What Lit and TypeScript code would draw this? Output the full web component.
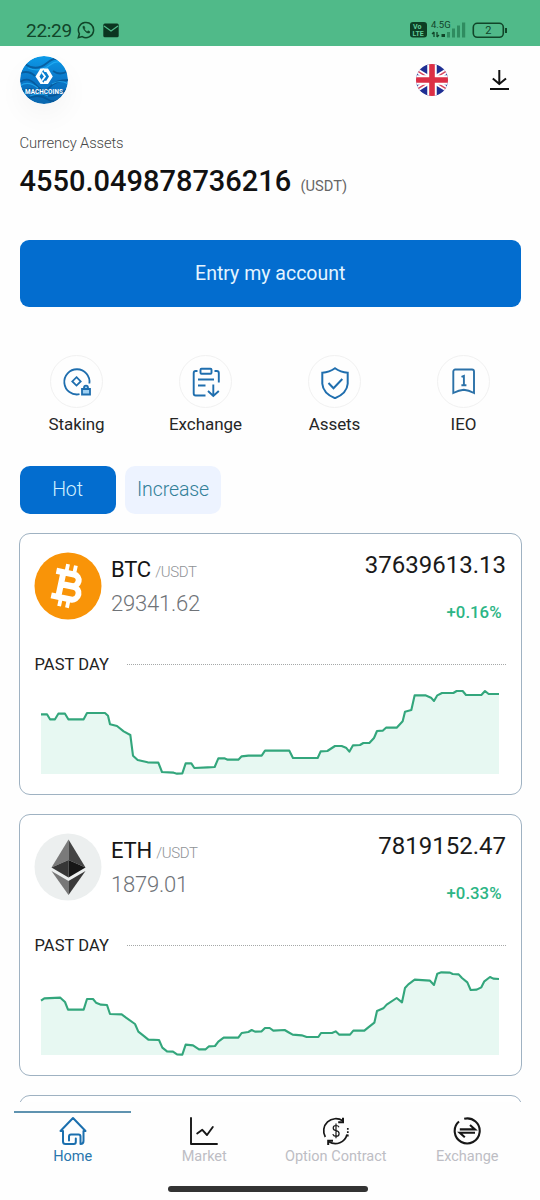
import { LitElement, html, css, svg } from "lit";
import { customElement, property } from "lit/decorators.js";

type Point = [number, number];

const BTC_DAY: Point[] = [
  [0, 121], [18, 121], [27, 136], [42, 136], [52, 119], [72, 119], [82, 136], [128, 136], [138, 117], [192, 117],
  [201, 125], [207, 151], [228, 156], [248, 172], [268, 183], [276, 245], [290, 258], [320, 265], [352, 266],
  [363, 294], [398, 296], [408, 299], [424, 298], [434, 268], [451, 268], [460, 282], [500, 280], [521, 279],
  [532, 253], [550, 253], [560, 257], [592, 257], [602, 247], [622, 245], [662, 245], [672, 230], [745, 230],
  [756, 252], [830, 252], [839, 232], [859, 231], [882, 216], [902, 216], [915, 221], [925, 233], [936, 214],
  [957, 213], [967, 207], [985, 207], [999, 192], [1008, 171], [1025, 170], [1035, 161], [1067, 161], [1085, 142],
  [1092, 113], [1111, 108], [1121, 64], [1153, 64], [1170, 71], [1179, 81], [1189, 64], [1203, 57], [1237, 57],
  [1247, 51], [1265, 51], [1275, 63], [1321, 63], [1332, 51], [1343, 60], [1374, 60],
];

const ETH_DAY: Point[] = [
  [0, 137], [10, 130], [58, 128], [72, 141], [81, 164], [128, 164], [138, 132], [156, 132], [165, 143], [180, 149],
  [198, 150], [207, 177], [242, 178], [255, 188], [282, 207], [292, 230], [310, 244], [322, 254], [354, 255],
  [364, 278], [378, 289], [396, 290], [408, 298], [424, 299], [434, 269], [456, 271], [474, 283], [494, 283],
  [504, 274], [522, 273], [532, 260], [548, 248], [592, 248], [602, 234], [622, 231], [632, 225], [642, 230],
  [662, 229], [672, 219], [686, 219], [697, 227], [731, 225], [741, 231], [755, 239], [782, 241], [797, 246],
  [832, 246], [840, 234], [873, 234], [884, 229], [895, 239], [927, 239], [937, 227], [970, 227], [982, 217],
  [1000, 203], [1008, 168], [1027, 160], [1037, 149], [1067, 129], [1083, 142], [1092, 99], [1102, 88], [1121, 74],
  [1167, 77], [1179, 90], [1189, 56], [1201, 52], [1227, 53], [1235, 57], [1253, 58], [1263, 69], [1279, 82],
  [1289, 105], [1307, 104], [1321, 97], [1330, 79], [1347, 66], [1357, 71], [1374, 72],
];

const btcIcon = html`<svg width="68" height="68" viewBox="0 0 68 68">
  <circle cx="34" cy="34" r="33.5" fill="#f99408" />
  <g transform="rotate(12 34 34)" fill="none" stroke="#fff" stroke-width="6">
    <path d="M19.500 21.500H37.500a5.800 5.800 0 0 1 0 11.800H27M27 33.700H39.500a6.400 6.400 0 0 1 0 12.900H19.500M26.700 21V47" />
    <path d="M29.500 12.500V22M37.500 12.500V22M29.500 46V55.500M37.500 46V55.500" stroke-width="3.800" />
  </g>
</svg>`;

const ethIcon = html`<svg width="68" height="68" viewBox="0 0 68 68">
  <circle cx="34" cy="34" r="33.5" fill="#ecefef" />
  <path d="M34.500 6.500L17.500 34.500L34.500 27Z" fill="#7a7a7a" />
  <path d="M34.500 6.500L51.500 34.500L34.500 27Z" fill="#444" />
  <path d="M34.500 27L17.500 34.500L34.500 44.500Z" fill="#373737" />
  <path d="M34.500 27L51.500 34.500L34.500 44.500Z" fill="#161616" />
  <path d="M17.500 38L34.500 48V62Z" fill="#777" />
  <path d="M51.500 38L34.500 48V62Z" fill="#3a3a3a" />
</svg>`;

@customElement("area-chart")
class AreaChart extends LitElement {
  @property({ attribute: false }) points: Point[] = [];

  static styles = css`
    :host { display: block; height: 100px; }
    .plot { display: block; width: 458px; height: 100px; overflow: visible; }
    .area { fill: #e7f8f2; }
    .line { fill: none; stroke: #33a67c; stroke-width: 6.3; stroke-linejoin: round; }
  `;

  render() {
    const line = this.points.map((p) => p.join(",")).join(" ");
    return html`<svg class="plot" viewBox="0 0 1374 300">
      ${svg`<polygon class="area" points="0,300 ${line} 1374,300" />
      <polyline class="line" points=${line} />`}
    </svg>`;
  }
}

@customElement("coin-card")
class CoinCard extends LitElement {
  @property() symbol = "";
  @property() price = "";
  @property() volume = "";
  @property() change = "";
  @property({ attribute: false }) icon: unknown = null;
  @property({ attribute: false }) points: Point[] = [];

  static styles = css`
    :host {
      display: block; box-sizing: border-box; height: 262.500px; flex: none;
      border: 1px solid #9fb2c2; border-radius: 11px; background: #fff;
      padding: 18px 14.500px 0 14px;
    }
    .top { display: flex; height: 68px; }
    .icon { width: 68px; height: 68px; }
    .icon svg { display: block; }
    .name { margin-left: 9px; padding-top: 1px; flex: 1; }
    .pair { height: 34px; line-height: 34px; font-size: 22px; letter-spacing: -0.200px; color: #151515; white-space: nowrap; }
    .quote { font-size: 15px; font-weight: 300; color: #8f9296; letter-spacing: -0.400px; margin-left: -1px; }
    .price { height: 34px; line-height: 34px; font-size: 22px; letter-spacing: -0.200px; font-weight: 300; color: #6f7378; }
    .stats { text-align: right; }
    .volume { height: 26px; line-height: 26px; font-size: 24px; color: #1a1a1a; }
    .change { margin-top: 21px; padding-right: 4.500px; line-height: 26px; font-size: 16.800px; font-weight: 500; color: #2cb585; }
    .period { display: flex; align-items: center; gap: 18.500px; height: 20px; margin-top: 35px; font-size: 16.500px; letter-spacing: 0.050px; color: #222; padding-left: 0.500px; }
    .rule { flex: 1; border-top: 1px dotted #a5a8a8; }
    .chart { margin: -1px 0 0 7px; }
  `;

  render() {
    return html`
      <div class="top">
        <div class="icon">${this.icon}</div>
        <div class="name">
          <div class="pair">${this.symbol} <span class="quote">/USDT</span></div>
          <div class="price">${this.price}</div>
        </div>
        <div class="stats">
          <div class="volume">${this.volume}</div>
          <div class="change">${this.change}</div>
        </div>
      </div>
      <div class="period"><span>PAST DAY</span><span class="rule"></span></div>
      <area-chart class="chart" .points=${this.points}></area-chart>
    `;
  }
}

const stakingIcon = html`<svg width="30" height="30" viewBox="0 0 30 30" fill="none" stroke="#1f6eae" stroke-width="1.800">
  <path d="M17.500 27.200A12.600 12.600 0 1 1 27.400 16.500" /><path d="M14.500 10.200L18.700 14.400L14.500 18.600L10.300 14.400Z" />
  <path d="M20 22H28V27.500H20ZM22 22V20.700a2 2 0 0 1 4 0V22" fill="#9fd0f2" />
</svg>`;
const clipboardIcon = html`<svg width="30" height="32" viewBox="0 0 30 32" fill="none" stroke="#1f6eae" stroke-width="1.900">
  <rect x="9.500" y="2.800" width="11" height="5" rx="1" />
  <path d="M6.500 5H4.700a2 2 0 0 0-2 2V27.500a2 2 0 0 0 2 2H14.500M23.500 5h2.300a2 2 0 0 1 2 2V16.500M7 13.500H23M7 19.500H14.500M22.300 18.500V29.500M17 25L22.300 30L27.800 25" />
</svg>`;
const shieldIcon = html`<svg width="30" height="34" viewBox="0 0 30 34" fill="none" stroke="#1f6eae" stroke-width="2">
  <path d="M15 4Q20.500 8 27.700 8.500V19.500Q27 29 15 34Q3 29 2.300 19.500V8.500Q9.500 8 15 4Z" transform="translate(0 -0.800)" /><path d="M8.500 18L13.500 23.300L22.300 14" />
</svg>`;
const ticketIcon = html`<svg width="26" height="28" viewBox="0 0 26 28" fill="none" stroke="#2b71a8" stroke-width="1.900">
  <path d="M4.300 1.500H21a2 2 0 0 1 2 2V25Q17.500 22.300 12.800 21.800Q8 22.300 2.300 25V3.500A2 2 0 0 1 4.300 1.500Z" />
  <path d="M10.500 8.800L12.900 7.800V16.800M10.400 17.200H15.400" />
</svg>`;

const homeIcon = html`<svg width="30" height="30" viewBox="0 0 30 30" fill="none" stroke="#1b6fae" stroke-width="2" stroke-linecap="round" stroke-linejoin="round">
  <path d="M5 15H2.500L15 2L27.500 15H25.500V25Q25.500 28 22.500 28V20.500a2 2 0 0 0-2-2H13a2 2 0 0 0-2 2V24.500M5 15V25.500a2.500 2.500 0 0 0 2.500 2.500H15.800a2 2 0 0 0 2-2V22.500" />
</svg>`;
const marketIcon = html`<svg width="30" height="30" viewBox="0 0 30 30" fill="none" stroke="#171717" stroke-width="1.900" stroke-linecap="round" stroke-linejoin="round">
  <path d="M2 2V28H28M8.200 17.500L13.300 13.800L18 19L23.800 11" />
</svg>`;
const optionIcon = html`<svg width="30" height="30" viewBox="0 0 30 30" fill="none" stroke="#171717" stroke-width="1.700">
  <path d="M4.300 21A12.200 12.200 0 0 1 21.700 4.800M26 18.500A12 12 0 0 1 8 25.800" />
  <path d="M22 1.800V6.200H17.200M12 24.800H7.200V29" stroke-width="2" />
  <path d="M26.800 12V20.500" stroke-dasharray="1.800 1.500" />
  <path d="M18 11.200Q17.300 9.500 15 9.500Q12.200 9.500 12.200 12Q12.200 14.200 15 14.700Q18.100 15.200 18.100 17.700Q18.100 20.300 15 20.300Q12.400 20.300 11.800 18.200M15 7.500V22.300" stroke-width="1.200" />
</svg>`;
const exchangeIcon = html`<svg width="30" height="30" viewBox="0 0 30 30" fill="none" stroke="#171717" stroke-width="2.100">
  <path d="M12.200 2.800A12.500 12.500 0 1 1 7 5.500" />
  <path d="M7.800 13.400H23L18 9M23 16.800H7.800L12.800 21.200" />
</svg>`;

@customElement("app-root")
class AppRoot extends LitElement {
  static styles = css`
    :host { display: block; font-family: Roboto, "Noto Sans", sans-serif; color: #1c1c1c; }
    .screen { display: flex; flex-direction: column; width: 540px; height: 1200px; overflow: hidden; background: #fefefe; }
    svg { display: block; }
    .status { flex: none; display: flex; align-items: center; height: 32px; padding: 14px 32px 0 26px; background: #50ba89; color: #114529; }
    .clock { font-size: 19px; letter-spacing: -0.300px; line-height: 32px; width: 51px; padding-top: 1px; }
    .status-mail { margin-left: 8px; }
    .status-right { margin-left: auto; display: flex; align-items: center; }
    .network { display: flex; flex-direction: column; width: 36px; margin-left: 4px; }
    .gen { font-size: 9.500px; line-height: 9px; height: 9px; margin-top: -2px; }
    .bars { margin-top: -7px; }
    .battery { margin-left: 5px; }
    .header { flex: none; display: flex; align-items: center; height: 68px; padding: 0 30px 0 19.500px; }
    .logo { border-radius: 50%; box-shadow: 0 12px 28px rgba(0, 0, 0, 0.040); width: 48px; height: 48px; }
    .flag { margin-left: auto; margin-right: 41px; }
    .assets { flex: none; box-sizing: border-box; height: 86px; padding: 18px 19.500px 0; }
    .caption { font-size: 14.800px; line-height: 22px; color: #484848; font-weight: 300; letter-spacing: -0.120px; }
    .balance { margin-top: 8.500px; line-height: 36px; font-size: 29px; font-weight: 500; color: #111; }
    .unit { font-size: 14.700px; font-weight: 400; color: #666; margin-left: 2px; }
    .entry { flex: none; margin: 39.500px 19px 0 19.500px; height: 67.500px; line-height: 67px; border: 0; padding: 0; border-radius: 9px; background: #036dcf; color: #e4f4ff; font: inherit; font-size: 19.500px; }
    .shortcuts { flex: none; display: grid; grid-template-columns: repeat(4, 129px); margin: 48px 0 0 12px; height: 110.500px; }
    .shortcut { display: flex; flex-direction: column; align-items: center; }
    .disc { box-sizing: border-box; width: 53px; height: 53px; border: 1.500px solid #f1f1f1; border-radius: 50%; display: grid; place-items: center; }
    .shortcut-label { margin-top: 4px; line-height: 24px; font-size: 17px; letter-spacing: -0.050px; color: #262626; }
    .tabs { flex: none; display: flex; gap: 9.500px; padding-left: 19.500px; height: 48px; }
    .tab { width: 96px; height: 48px; line-height: 48px; border-radius: 10px; text-align: center; font-size: 19.500px; font-weight: 300; background: #edf3ff; color: #327f98; letter-spacing: -0.100px; }
    .tab.active { background: #036dcf; color: #d3f1ff; }
    .list { flex: 1; min-height: 0; overflow: hidden; display: flex; flex-direction: column; gap: 18.500px; padding: 19px 18.500px 0 19px; }
    .next-card { flex: none; box-sizing: border-box; height: 263px; border: 1px solid #9fb2c2; border-radius: 11px; background: #fff; }
    .nav { flex: none; height: 98px; background: #fefefe; display: flex; flex-direction: column; align-items: center; }
    .nav-items { display: grid; grid-template-columns: repeat(4, 131.500px); height: 84px; }
    .nav-item { display: flex; flex-direction: column; align-items: center; color: #bdbdc4; }
    .marker { height: 2px; width: 117px; margin-top: 8.500px; }
    .active .marker { background: #5f93b0; }
    .nav-item svg { margin-top: 3px; }
    .nav-label { margin-top: 1.500px; font-size: 14.500px; line-height: 20px; white-space: nowrap; }
    .nav-item.active { color: #2976ad; }
    .handle { width: 200px; height: 5.500px; border-radius: 3px; background: #333; margin-right: 4px; }
  `;

  private shortcut(icon: unknown, label: string) {
    return html`<div class="shortcut"><div class="disc">${icon}</div><div class="shortcut-label">${label}</div></div>`;
  }

  private navItem(icon: unknown, label: string, active = false) {
    return html`<div class="nav-item ${active ? "active" : ""}">
      <div class="marker"></div>${icon}<div class="nav-label">${label}</div>
    </div>`;
  }

  render() {
    return html`<div class="screen">
      <div class="status">
        <span class="clock">22:29</span>
        <svg width="18" height="18" viewBox="0 0 18 18" fill="none" stroke="#114529" stroke-width="1.500">
          <path d="M1.300 16.700L2.400 12.800A7.600 7.600 0 1 1 5.200 15.600Z" />
          <path d="M6 5.200C5.200 7.500 9.500 13 12.500 12L13 10.800L11 9.700L10 10.700C8.800 10.200 7.900 9.100 7.400 8L8 7.200L7.300 5.200Z" fill="#114529" stroke-width="0.500" />
        </svg>
        <svg class="status-mail" width="16" height="15" viewBox="0 0 16 15">
          <rect x="0.300" y="0.500" width="15.400" height="13.800" rx="1.500" fill="#0b3520" /><path d="M1 3L8 8L15 3" fill="none" stroke="#50ba89" stroke-width="1.300" />
        </svg>
        <div class="status-right">
          <svg width="17" height="16" viewBox="0 0 17 16">
            <rect width="17" height="15.500" rx="3" fill="#0d3e24" />
            <text x="3" y="7" font-size="7" font-weight="700" fill="#62cc9b">Vo</text><text x="2.500" y="13.800" font-size="7" font-weight="700" fill="#62cc9b">LTE</text>
          </svg>
          <div class="network">
            <span class="gen">4.5G</span>
            <svg class="bars" width="36" height="16" viewBox="0 0 36 16">
              <path d="M3 10V15M1 12L3 10M6 10V15M8 13L6 15" stroke="#114529" stroke-width="1.300" />
              <rect x="10.500" y="12" width="3.500" height="3" fill="#114529" />
              <g fill="#2f8c60"><rect x="16" y="10" width="3" height="5.500" /><rect x="21" y="6.500" width="3" height="9" /><rect x="26" y="3.500" width="3" height="12" /><rect x="31" y="0.500" width="3.200" height="15" /></g>
            </svg>
          </div>
          <svg class="battery" width="36" height="17" viewBox="0 0 36 17">
            <rect x="1.300" y="1.300" width="30" height="14" rx="4" fill="none" stroke="#114529" stroke-width="1.600" />
            <path d="M34 6V11" stroke="#114529" stroke-width="2" /><text x="16.300" y="12.300" font-size="11" text-anchor="middle" fill="#114529">2</text>
          </svg>
        </div>
      </div>

      <div class="header">
        <svg class="logo" viewBox="0 0 48 48">
          <defs>
            <linearGradient id="sea" x1="0" y1="0" x2="0" y2="1"><stop offset="0" stop-color="#0c9ae8" /><stop offset="0.500" stop-color="#0a76c8" /><stop offset="1" stop-color="#0a67ae" /></linearGradient>
            <clipPath id="round"><circle cx="24" cy="24" r="24" /></clipPath>
          </defs>
          <g clip-path="url(#round)">
            <rect width="48" height="48" fill="url(#sea)" />
            <g fill="none" stroke="#07518f" stroke-width="1.800" opacity="0.750">
              <path d="M5 8Q16 16 27 7T44 8M0 17Q9 14 15 20M33 15Q40 20 48 15M0 26Q8 20 16 29T30 31T48 24M1 36Q10 30 20 37T46 34M6 43Q18 37 27 43T42 40" />
            </g>
            <g fill="none" stroke="#27b4fa" stroke-width="1.200" opacity="0.700"><path d="M8 12Q20 17 30 9T46 13M0 30Q8 24 18 32M32 28Q40 23 48 28M10 40Q20 36 28 40" /></g>
          </g>
          <path d="M20.500 12.500L15.500 20.500L20.500 28H24L19.500 20.500L24 12.500Z" fill="#fff" />
          <path d="M22.500 12.500H28L32.800 20.500L28 28H22.500L24.500 24.800H26.300L29 20.500L26.300 16H24.500Z" fill="#fff" />
          <path d="M22 16.500L25 20.500L22 24.500" fill="none" stroke="#fff" stroke-width="1.800" />
          <text x="24" y="37.500" text-anchor="middle" font-size="6.300" font-weight="700" fill="#fff" textLength="38">MACHCOINS</text>
        </svg>
        <svg class="flag" width="32" height="32" viewBox="0 0 32 32">
          <defs><clipPath id="disc"><circle cx="16" cy="16" r="16" /></clipPath></defs>
          <g clip-path="url(#disc)">
            <rect width="32" height="32" fill="#1f2f94" />
            <path d="M-2 5L34 27M34 5L-2 27" stroke="#fff" stroke-width="5" />
            <path d="M-2 5L34 27M34 5L-2 27" stroke="#d94a62" stroke-width="1.500" />
            <path d="M16 0V32M0 16H32" stroke="#fff" stroke-width="9.500" /><path d="M16 0V32M0 16H32" stroke="#dc2f46" stroke-width="5.600" />
          </g>
        </svg>
        <svg width="21" height="22" viewBox="0 0 21 22" fill="none" stroke="#111" stroke-width="2">
          <path d="M10.300 1V14.500M3.800 9.500L10.300 15L17 9.500M1 20H20" />
        </svg>
      </div>

      <div class="assets">
        <div class="caption">Currency Assets</div>
        <div class="balance">4550.049878736216 <span class="unit">(USDT)</span></div>
      </div>

      <button class="entry">Entry my account</button>

      <div class="shortcuts">
        ${this.shortcut(stakingIcon, "Staking")} ${this.shortcut(clipboardIcon, "Exchange")}
        ${this.shortcut(shieldIcon, "Assets")} ${this.shortcut(ticketIcon, "IEO")}
      </div>

      <div class="tabs"><div class="tab active">Hot</div><div class="tab">Increase</div></div>

      <div class="list">
        <coin-card symbol="BTC" price="29341.62" volume="37639613.13" change="+0.16%" .icon=${btcIcon} .points=${BTC_DAY}></coin-card>
        <coin-card symbol="ETH" price="1879.01" volume="7819152.47" change="+0.33%" .icon=${ethIcon} .points=${ETH_DAY}></coin-card>
        <div class="next-card"></div>
      </div>

      <div class="nav">
        <div class="nav-items">
          ${this.navItem(homeIcon, "Home", true)} ${this.navItem(marketIcon, "Market")}
          ${this.navItem(optionIcon, "Option Contract")} ${this.navItem(exchangeIcon, "Exchange")}
        </div>
        <div class="handle"></div>
      </div>
    </div>`;
  }
}
